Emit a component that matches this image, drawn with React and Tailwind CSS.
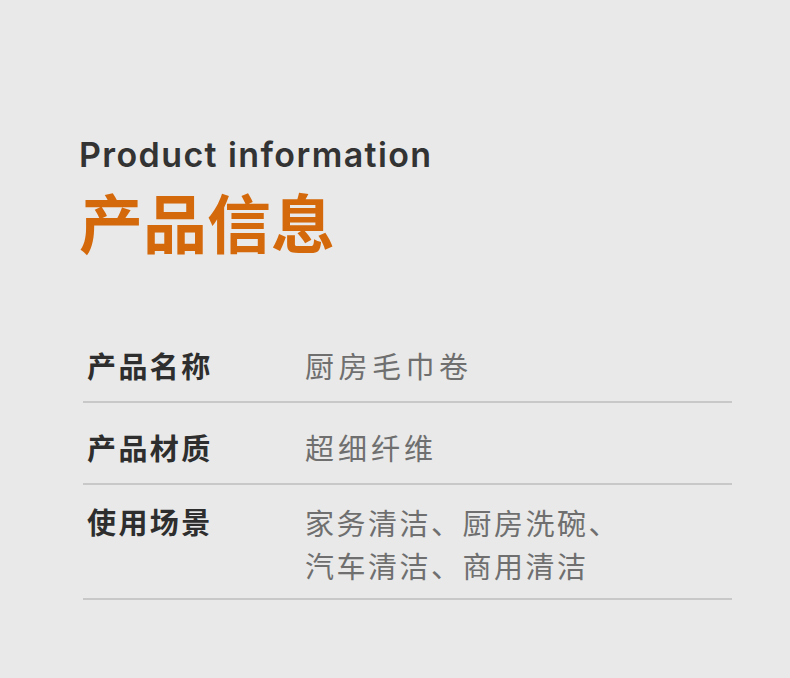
export default function App() {
  const cjk = { fontFamily: '"Noto Sans CJK SC", sans-serif' };
  return (
    <div className="w-[790px] h-[678px] bg-[#e9e9e9] overflow-hidden">
      <div className="pl-[79px] pt-[134px]">
        <div className="text-[34px] leading-[42px] font-semibold text-[#333333] tracking-[1.4px]" style={{ fontFamily: 'Inter, "Noto Sans", sans-serif' }}>
          Product information
        </div>
        <div className="mt-[8px] text-[64px] leading-[72px] font-bold text-[#d4690b]" style={cjk}>
          产品信息
        </div>
      </div>
      <div className="ml-[83px] w-[649px] mt-[89px]" style={cjk}>
        <div className="flex border-b-2 border-[#c8c8c8] pb-[16px]">
          <div className="w-[222px] pl-[4px] text-[29px] leading-[40px] font-bold text-[#2e2e2e] tracking-[2.4px]">产品名称</div>
          <div className="text-[29px] leading-[40px] text-[#6f6f6f] tracking-[4.5px]">厨房毛巾卷</div>
        </div>
        <div className="flex border-b-2 border-[#c8c8c8] pt-[24px] pb-[16px]">
          <div className="w-[222px] pl-[4px] text-[29px] leading-[40px] font-bold text-[#2e2e2e] tracking-[2.4px]">产品材质</div>
          <div className="text-[29px] leading-[40px] text-[#6f6f6f] tracking-[4px]">超细纤维</div>
        </div>
        <div className="flex border-b-2 border-[#c8c8c8] pt-[16px] pb-[11px]">
          <div className="w-[222px] pl-[4px] text-[29px] leading-[40px] font-bold text-[#2e2e2e] tracking-[2.4px]">使用场景</div>
          <div className="text-[29px] leading-[43px] text-[#6f6f6f] tracking-[2.5px]">
            <div>家务清洁、厨房洗碗、</div>
            <div>汽车清洁、商用清洁</div>
          </div>
        </div>
      </div>
    </div>
  );
}
